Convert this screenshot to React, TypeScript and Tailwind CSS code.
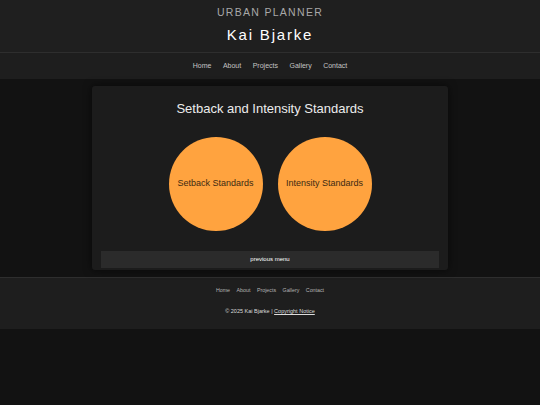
const links = ['Home', 'About', 'Projects', 'Gallery', 'Contact'];

function App() {
  return (
    <div className="min-h-[405px] bg-[#121212] font-['Liberation_Sans',Arial,sans-serif]">
      <header className="bg-[#1f1f1f] border-b border-[#2e2e2e] h-[53px] flex flex-col items-center pt-[5px]">
        <p className="text-[10.5px] leading-[14px] tracking-[1.3px] text-[#a8a8a8]">URBAN PLANNER</p>
        <h1 className="mt-[7px] text-[15px] leading-[18px] tracking-[1.8px] text-white">Kai Bjarke</h1>
      </header>
      <nav className="bg-[#1e1e1e] h-[26px] flex items-center justify-center gap-[11.5px]">
        {links.map((l) => (
          <span key={l} className="text-[7px] text-[#c4c4c4]">
            {l}
          </span>
        ))}
      </nav>
      <main className="pt-[7px] pb-[7px] flex justify-center">
        <section className="w-[356px] h-[184px] bg-[#1c1c1c] rounded-[3px] shadow-[0_0_8px_rgba(0,0,0,0.6)] px-[9px] pt-[15px] flex flex-col">
          <h2 className="text-center text-[13px] leading-[16px] text-[#ececec]">
            Setback and Intensity Standards
          </h2>
          <div className="mt-[20px] flex justify-center gap-[15px]">
            <div className="w-[94px] h-[94px] rounded-full bg-[#ffa33f] flex items-center justify-center">
              <span className="text-[9px] text-[#3d2a12]">Setback Standards</span>
            </div>
            <div className="w-[94px] h-[94px] rounded-full bg-[#ffa33f] flex items-center justify-center">
              <span className="text-[9px] text-[#3d2a12]">Intensity Standards</span>
            </div>
          </div>
          <button className="mt-[20px] h-[17px] w-full bg-[#2b2b2b] text-[6px] text-white">previous menu</button>
        </section>
      </main>
      <footer className="bg-[#1e1e1e] border-t border-[#2e2e2e] h-[52px] flex flex-col items-center pt-[9px]">
        <div className="flex gap-[6.5px]">
          {links.map((l) => (
            <span key={l} className="text-[5.3px] text-[#b4b4b4]">
              {l}
            </span>
          ))}
        </div>
        <p className="mt-[12px] text-[5.5px] text-[#dcdcdc]">
          © 2025 Kai Bjarke | <span className="underline">Copyright Notice</span>
        </p>
      </footer>
    </div>
  );
}

export default App;
